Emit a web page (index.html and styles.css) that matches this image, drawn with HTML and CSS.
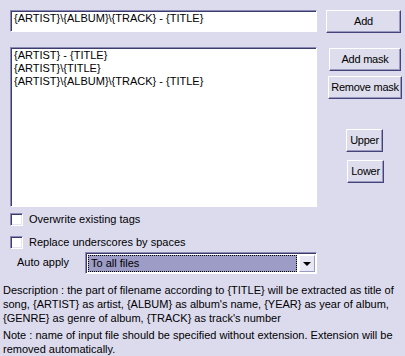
FILE: index.html
```html
<!DOCTYPE html>
<html lang="en">
<head>
  <meta charset="UTF-8">
  <title>Filename masks</title>
  <link rel="stylesheet" href="styles.css">
</head>
<body>
  <div class="panel">
    <div class="top-row">
      <div class="field">{ARTIST}\{ALBUM}\{TRACK} - {TITLE}</div>
      <div class="btn btn-add">Add</div>
    </div>

    <div class="mask-row">
      <div class="list">
        <div class="item">{ARTIST} - {TITLE}</div>
        <div class="item">{ARTIST}\{TITLE}</div>
        <div class="item">{ARTIST}\{ALBUM}\{TRACK} - {TITLE}</div>
      </div>
      <div class="side">
        <div class="btn btn-addmask">Add mask</div>
        <div class="btn btn-remove">Remove mask</div>
        <div class="btn btn-upper">Upper</div>
        <div class="btn btn-lower">Lower</div>
      </div>
    </div>

    <div class="check check-first"><span class="box"></span>Overwrite existing tags</div>
    <div class="check check-second"><span class="box"></span>Replace underscores by spaces</div>

    <div class="apply">
      <span class="apply-label">Auto apply</span>
      <div class="combo">
        <div class="combo-value">To all files</div>
        <div class="combo-arrow"><span class="tri"></span></div>
      </div>
    </div>

    <p class="desc">Description : the part of filename according to {TITLE} will be extracted as title of song, {ARTIST} as artist, {ALBUM} as album's name, {YEAR} as year of album, {GENRE} as genre of album, {TRACK} as track's number</p>
    <p class="note">Note : name of input file should be specified without extension. Extension will be removed automatically.</p>
  </div>
</body>
</html>
```

FILE: styles.css
```css
body {
  margin: 0;
  background: #dcdbee;
  font-family: 'Liberation Sans', Arial, sans-serif;
  font-size: 11px;
  color: #000;
}

.panel {
  width: 405px;
  height: 356px;
  padding-top: 10px;
  box-sizing: border-box;
}

.top-row {
  display: flex;
  gap: 9px;
  margin-left: 10px;
  height: 23px;
}

.field {
  width: 307px;
  height: 22px;
  box-sizing: border-box;
  background: #fff;
  border-top: 1px solid #8a8ab4;
  border-left: 1px solid #8a8ab4;
  border-right: 1px solid #fff;
  border-bottom: 1px solid #fff;
  box-shadow: inset 1px 1px 0 #3c3c6c;
  padding: 1px 3px 0 3px;
  line-height: 13px;
  white-space: nowrap;
}

.btn {
  box-sizing: border-box;
  height: 23px;
  line-height: 20px;
  text-align: center;
  letter-spacing: -0.25px;
  background: #dedded;
  border-top: 1px solid #fff;
  border-left: 1px solid #fff;
  border-right: 1px solid #44447a;
  border-bottom: 1px solid #44447a;
  box-shadow: inset -1px -1px 0 #9a9ac0;
  white-space: nowrap;
}

.btn-add {
  width: 75px;
}

.mask-row {
  display: flex;
  gap: 9px;
  margin-left: 10px;
  margin-top: 14px;
}

.list {
  width: 307px;
  height: 160px;
  box-sizing: border-box;
  background: #fff;
  border-top: 1px solid #8a8ab4;
  border-left: 1px solid #8a8ab4;
  border-right: 1px solid #fff;
  border-bottom: 1px solid #fff;
  box-shadow: inset 1px 1px 0 #3c3c6c;
  padding: 1px 3px;
  line-height: 13px;
}

.side {
  display: flex;
  flex-direction: column;
  align-items: flex-start;
}

.btn-addmask {
  width: 72px;
  margin-top: 1px;
  margin-left: 3px;
}

.btn-remove {
  width: 74px;
  margin-top: 5px;
  margin-left: 2px;
}

.btn-upper {
  width: 37px;
  margin-top: 30px;
  margin-left: 20px;
}

.btn-lower {
  width: 37px;
  margin-top: 8px;
  margin-left: 21px;
}

.check {
  display: flex;
  align-items: center;
  gap: 6px;
  margin-left: 10px;
  height: 13px;
  line-height: 13px;
}

.check-first {
  margin-top: 6px;
}

.check-second {
  margin-top: 10px;
}

.box {
  width: 13px;
  height: 13px;
  box-sizing: border-box;
  background: #fff;
  border-top: 1px solid #8a8ab4;
  border-left: 1px solid #8a8ab4;
  border-right: 1px solid #fff;
  border-bottom: 1px solid #fff;
  box-shadow: inset 1px 1px 0 #3c3c6c, inset -1px -1px 0 #e4e4f2;
}

.apply {
  display: flex;
  align-items: center;
  margin-top: 3px;
  margin-left: 17px;
  height: 22px;
}

.apply-label {
  width: 68px;
  margin-top: -2px;
}

.combo {
  display: flex;
  width: 232px;
  height: 22px;
  box-sizing: border-box;
  background: #fff;
  border-top: 1px solid #8a8ab4;
  border-left: 1px solid #8a8ab4;
  border-right: 1px solid #fff;
  border-bottom: 1px solid #fff;
  box-shadow: inset 1px 1px 0 #3c3c6c;
  padding: 2px 1px 1px 2px;
}

.combo-value {
  flex-grow: 1;
  margin-right: 2px;
  background: #9d9cc6;
  border: 1px dotted #000;
  padding-left: 2px;
  line-height: 14px;
}

.combo-arrow {
  width: 16px;
  box-sizing: border-box;
  background: #e8e7f4;
  border-top: 1px solid #fff;
  border-left: 1px solid #fff;
  border-right: 1px solid #9a9ac0;
  border-bottom: 1px solid #9a9ac0;
  display: flex;
  align-items: center;
  justify-content: center;
}

.tri {
  width: 0;
  height: 0;
  border-left: 4px solid transparent;
  border-right: 4px solid transparent;
  border-top: 4px solid #000;
}

.desc,
.note {
  margin: 0 0 0 3px;
  width: 395px;
  line-height: 14px;
}

.desc {
  margin-top: 9px;
}

.note {
  margin-top: 3px;
}
```
